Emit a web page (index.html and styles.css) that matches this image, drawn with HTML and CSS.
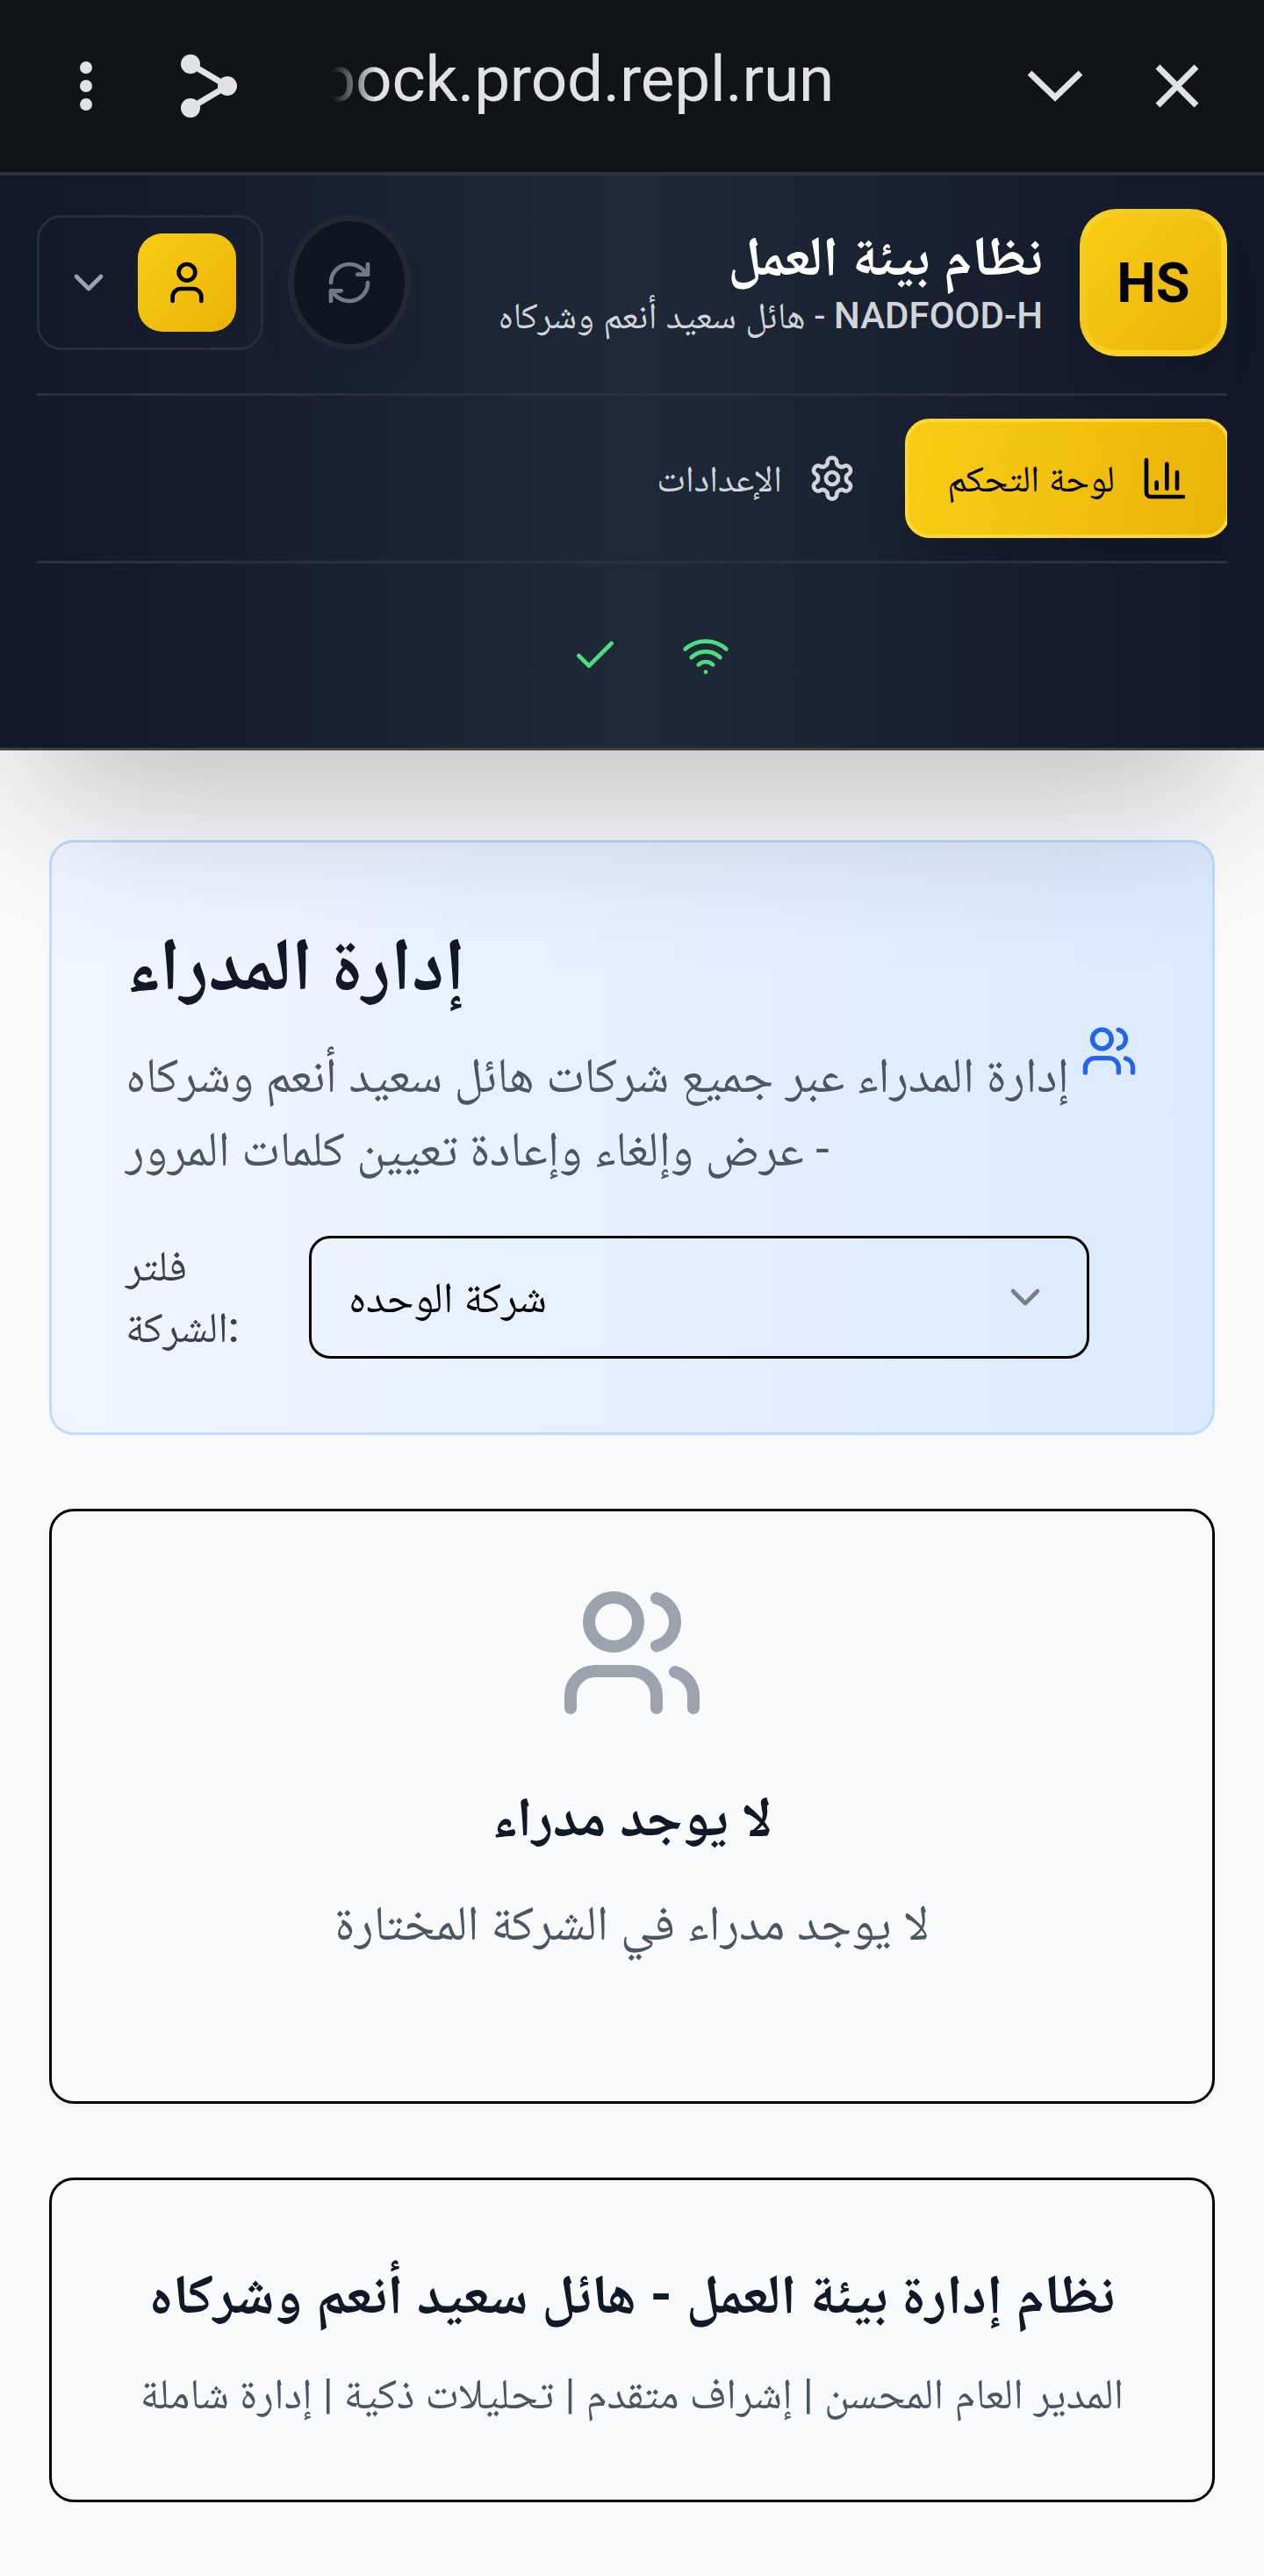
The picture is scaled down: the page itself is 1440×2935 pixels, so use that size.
FILE: index.html
```html
<!DOCTYPE html>
<html lang="ar">
<head>
<meta charset="utf-8">
<title>إدارة المدراء</title>
<link rel="stylesheet" href="styles.css">
</head>
<body>
<div class="browser-bar">
  <svg class="bar-more" viewBox="0 0 20 60"><circle cx="10" cy="9" r="7"/><circle cx="10" cy="30" r="7"/><circle cx="10" cy="51" r="7"/></svg>
  <svg class="bar-share" viewBox="0 0 66 72"><path d="M12 11 54 36 12 61"/><circle cx="12" cy="11" r="11"/><circle cx="54" cy="36" r="11"/><circle cx="12" cy="61" r="11"/></svg>
  <div class="bar-url"><span>bock.prod.repl.run</span></div>
  <svg class="bar-chevron" viewBox="0 0 64 38"><path d="M3 4 32 32 61 4"/></svg>
  <svg class="bar-close" viewBox="0 0 50 50"><path d="M3 3 47 47M47 3 3 47"/></svg>
</div>

<header class="header">
  <div class="brand-row" dir="rtl">
    <div class="logo">HS</div>
    <div class="brand">
      <h1>نظام بيئة العمل</h1>
      <p><b>NADFOOD-H</b> - هائل سعيد أنعم وشركاه</p>
    </div>
    <button class="refresh"><svg class="icon" viewBox="0 0 24 24"><path d="M3 12a9 9 0 0 1 9-9 9.75 9.75 0 0 1 6.74 2.74L21 8"/><path d="M21 3v5h-5"/><path d="M21 12a9 9 0 0 1-9 9 9.75 9.75 0 0 1-6.74-2.74L3 16"/><path d="M8 16H3v5"/></svg></button>
    <button class="user-menu">
      <span class="avatar"><svg class="icon" viewBox="0 0 24 24"><path d="M19 21v-2a4 4 0 0 0-4-4H9a4 4 0 0 0-4 4v2"/><circle cx="12" cy="7" r="4"/></svg></span>
      <svg class="icon" viewBox="0 0 24 24"><path d="m6 9 6 6 6-6"/></svg>
    </button>
  </div>
  <nav class="nav" dir="rtl">
    <a class="tab tab-active"><svg class="icon" viewBox="0 0 24 24"><path d="M3 3v16a2 2 0 0 0 2 2h16"/><path d="M18 17V9"/><path d="M13 17V5"/><path d="M8 17v-3"/></svg><span>لوحة التحكم</span></a>
    <a class="tab"><svg class="icon" viewBox="0 0 24 24"><path d="M12.22 2h-.44a2 2 0 0 0-2 2v.18a2 2 0 0 1-1 1.73l-.43.25a2 2 0 0 1-2 0l-.15-.08a2 2 0 0 0-2.73.73l-.22.38a2 2 0 0 0 .73 2.73l.15.1a2 2 0 0 1 1 1.72v.51a2 2 0 0 1-1 1.74l-.15.09a2 2 0 0 0-.73 2.73l.22.38a2 2 0 0 0 2.73.73l.15-.08a2 2 0 0 1 2 0l.43.25a2 2 0 0 1 1 1.73V20a2 2 0 0 0 2 2h.44a2 2 0 0 0 2-2v-.18a2 2 0 0 1 1-1.73l.43-.25a2 2 0 0 1 2 0l.15.08a2 2 0 0 0 2.73-.73l.22-.39a2 2 0 0 0-.73-2.73l-.15-.08a2 2 0 0 1-1-1.74v-.5a2 2 0 0 1 1-1.74l.15-.09a2 2 0 0 0 .73-2.73l-.22-.38a2 2 0 0 0-2.73-.73l-.15.08a2 2 0 0 1-2 0l-.43-.25a2 2 0 0 1-1-1.73V4a2 2 0 0 0-2-2z"/><circle cx="12" cy="12" r="3"/></svg><span>الإعدادات</span></a>
  </nav>
  <div class="status">
    <svg class="icon" viewBox="0 0 24 24"><path d="M20 6 9 17l-5-5"/></svg>
    <svg class="icon" viewBox="0 0 24 24"><path d="M12 20h.01"/><path d="M2 8.82a15 15 0 0 1 20 0"/><path d="M5 12.859a10 10 0 0 1 14 0"/><path d="M8.5 16.429a5 5 0 0 1 7 0"/></svg>
  </div>
</header>

<main class="main">
  <section class="card managers">
    <div class="managers-head">
      <div class="managers-text">
        <h2>إدارة المدراء</h2>
        <p dir="rtl">إدارة المدراء عبر جميع شركات هائل سعيد أنعم وشركاه<br>- عرض وإلغاء وإعادة تعيين كلمات المرور</p>
      </div>
      <svg class="icon users-icon" viewBox="0 0 24 24"><path d="M16 21v-2a4 4 0 0 0-4-4H6a4 4 0 0 0-4 4v2"/><circle cx="9" cy="7" r="4"/><path d="M22 21v-2a4 4 0 0 0-3-3.87"/><path d="M16 3.13a4 4 0 0 1 0 7.75"/></svg>
    </div>
    <div class="filter">
      <label>فلتر<br>الشركة<b>:</b></label>
      <div class="select"><span>شركة الوحده</span><svg class="icon" viewBox="0 0 24 24"><path d="m6 9 6 6 6-6"/></svg></div>
    </div>
  </section>

  <section class="card empty">
    <svg class="icon empty-icon" viewBox="0 0 24 24"><path d="M16 21v-2a4 4 0 0 0-4-4H6a4 4 0 0 0-4 4v2"/><circle cx="9" cy="7" r="4"/><path d="M22 21v-2a4 4 0 0 0-3-3.87"/><path d="M16 3.13a4 4 0 0 1 0 7.75"/></svg>
    <h3>لا يوجد مدراء</h3>
    <p>لا يوجد مدراء في الشركة المختارة</p>
  </section>

  <footer class="card footer" dir="rtl">
    <h3>نظام إدارة بيئة العمل - هائل سعيد أنعم وشركاه</h3>
    <p>المدير العام المحسن | إشراف متقدم | تحليلات ذكية | إدارة شاملة</p>
  </footer>
</main>
</body>
</html>
```
FILE: styles.css
```css
* { box-sizing: border-box; }
body {
  margin: 0;
  background: #f9fafc;
  font-family: Roboto, "Noto Naskh Arabic", "DejaVu Sans", sans-serif;
  height: 2935px;
  overflow: hidden;
}
h1, h2, h3, p { margin: 0; white-space: nowrap; }
button { font: inherit; padding: 0; background: none; }
.icon {
  width: 56px;
  height: 56px;
  flex: none;
  fill: none;
  stroke: currentColor;
  stroke-width: 2;
  stroke-linecap: round;
  stroke-linejoin: round;
}

/* browser bar */
.browser-bar {
  height: 200px;
  padding: 0 71px 0 88px;
  background: #101418;
  border-bottom: 4px solid #303338;
  display: flex;
  align-items: center;
  fill: #e1e2e8;
  stroke: #e1e2e8;
}
.browser-bar svg { flex: none; }
.browser-bar circle { stroke: none; }
.browser-bar path { fill: none; stroke-width: 7; }
.bar-more { width: 20px; height: 60px; }
.bar-share { width: 66px; height: 72px; margin-left: 97px; }
.bar-url {
  width: 571px;
  height: 100px;
  margin: 0 220px 16px 108px;
  overflow: hidden;
  display: flex;
  justify-content: flex-end;
  font-size: 73px;
  letter-spacing: -.25px;
  line-height: 100px;
  color: #e1e2e8;
  -webkit-mask-image: linear-gradient(90deg, transparent, #000 50px);
  mask-image: linear-gradient(90deg, transparent, #000 50px);
}
.bar-chevron { width: 64px; height: 38px; }
.bar-close { width: 50px; height: 50px; margin-left: 82px; }

/* header */
.header {
  position: relative;
  z-index: 2;
  height: 655px;
  padding: 0 42px;
  background: linear-gradient(90deg, #111827, #1f2937 50%, #111827);
  border-bottom: 3px solid #444132;
  box-shadow: 0 88px 175px -42px rgba(0, 0, 0, .25);
}
.brand-row {
  height: 251px;
  padding: 38px 0 42px;
  border-bottom: 3px solid #29313f;
  display: flex;
  align-items: center;
}
.logo {
  width: 168px;
  height: 168px;
  border-radius: 42px;
  border: 7px solid rgba(253, 224, 71, .4);
  background: linear-gradient(135deg, #facc15, #eab308);
  box-shadow: 0 35px 52px -10px rgba(0, 0, 0, .12);
  display: flex;
  align-items: center;
  justify-content: center;
  font-size: 63px;
  font-weight: 700;
  color: #000;
}
.brand { margin-right: 42px; padding-top: 4px; flex: 1; }
.brand h1 { font-size: 63.6px; line-height: 70px; font-weight: 700; color: #fff; }
.brand p { font-size: 42px; line-height: 63px; color: #d1d5db; }
.brand b, .filter b { font-weight: 500; }
.refresh {
  width: 140px;
  height: 154px;
  border-radius: 50%;
  border: 7px solid #212833;
  background: #10161f;
  color: #747a84;
  box-shadow: 0 35px 52px -10px rgba(0, 0, 0, .08);
  display: flex;
  align-items: center;
  justify-content: center;
}
.user-menu {
  width: 258px;
  height: 154px;
  margin-right: 28px;
  border: 3px solid #252e3c;
  border-radius: 28px;
  color: #9ca3af;
  display: flex;
  align-items: center;
  padding: 0 28px;
  gap: 28px;
}
.avatar {
  width: 112px;
  height: 112px;
  border-radius: 28px;
  background: linear-gradient(135deg, #facc15, #eab308);
  color: #000;
  display: flex;
  align-items: center;
  justify-content: center;
}
.nav {
  height: 191px;
  padding: 26px 0 0;
  border-bottom: 3px solid #29313f;
  display: flex;
  overflow: hidden;
}
.tab {
  height: 136px;
  padding: 0 45px;
  margin-right: 10px;
  display: flex;
  align-items: center;
  gap: 29px;
  font-size: 42px;
  color: #d1d5db;
}
.tab span { line-height: 63px; }
.tab-active {
  width: 370px;
  margin-right: -3px;
  padding: 0 42px 0 0;
  border: 4px solid #fdd835;
  border-radius: 28px;
  background: linear-gradient(100deg, #facc15, #eab308);
  box-shadow: 0 35px 52px -10px rgba(0, 0, 0, .2);
  font-size: 42.6px;
  color: #000;
}
.status {
  height: 210px;
  display: flex;
  align-items: center;
  justify-content: center;
  gap: 70px;
  padding-left: 42px;
  color: #4ade80;
}

/* content */
.main { padding: 102px 56px 0; }
.card { border: 3px solid #000; border-radius: 28px; }
.managers {
  height: 678px;
  padding: 83px 85px 0 84px;
  border-color: #bfdbfe;
  background: linear-gradient(90deg, #eff6ff, #dbeafe);
}
.managers-head { display: flex; align-items: center; justify-content: space-between; }
.managers-text h2 { font-size: 84.8px; line-height: 112px; font-weight: 700; color: #111827; }
.managers-text p {
  margin-top: 28px;
  font-size: 56px;
  line-height: 84px;
  word-spacing: -.4px;
  text-align: left;
  color: #4b5563;
}
.users-icon { width: 65px; height: 65px; color: #2563eb; }
.filter {
  margin-top: 57px;
  display: flex;
  align-items: center;
}
.filter label {
  width: 209px;
  font-size: 49px;
  line-height: 70px;
  color: #374151;
}
.select {
  width: 889px;
  height: 140px;
  padding: 0 42px;
  border: 3px solid #000;
  border-radius: 24px;
  display: flex;
  align-items: center;
  justify-content: space-between;
  font-size: 49px;
  color: #000;
}
.select span { padding-top: 1px; line-height: 70px; }
.select .icon { color: #777f8b; }
.empty {
  height: 678px;
  margin-top: 84px;
  padding-top: 77px;
  text-align: center;
  box-shadow: 0 4px 7px rgba(0, 0, 0, .05);
}
.empty-icon { display: block; width: 168px; height: 168px; margin: 0 auto; color: #9ca3af; }
.empty h3 { margin-top: 55px; font-size: 63px; line-height: 98px; color: #111827; }
.empty p { margin-top: 29px; font-size: 56px; line-height: 84px; color: #4b5563; }
.footer {
  height: 370px;
  margin-top: 84px;
  padding-top: 82px;
  text-align: center;
}
.footer h3 { font-size: 63.5px; line-height: 98px; color: #111827; }
.footer p { margin-top: 29px; font-size: 49px; line-height: 70px; color: #4b5563; }
```
